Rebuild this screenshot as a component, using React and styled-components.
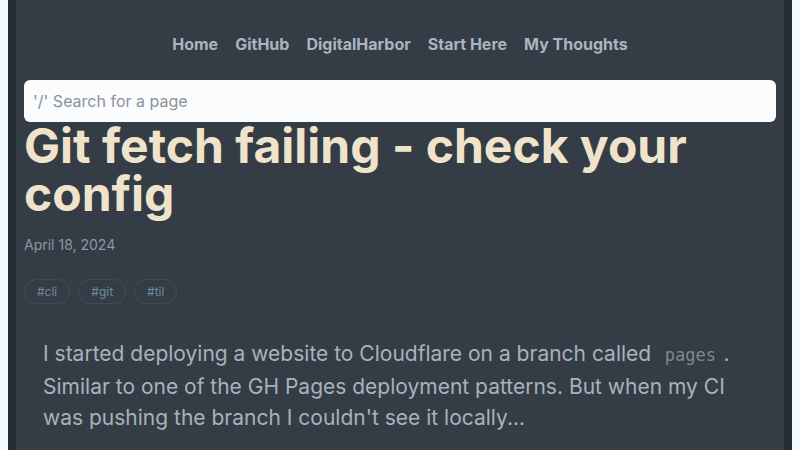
import React from 'react';
import styled, { createGlobalStyle } from 'styled-components';

const GlobalStyle = createGlobalStyle`
  html, body {
    margin: 0;
    padding: 0;
    background: #f0fbff;
    font-family: Inter, "Noto Sans", sans-serif;
  }
  * { box-sizing: border-box; }
`;

const Frame = styled.div`
  margin: 0 8px;
  padding: 0 8px;
  min-height: 100vh;
  background: #252b33;
`;

const Main = styled.main`
  min-height: 100vh;
  background: #343c46;
  padding: 0 8px;
  display: flex;
  flex-direction: column;
`;

const Nav = styled.nav`
  display: flex;
  justify-content: center;
  gap: 17px;
  padding-top: 34px;
  height: 80px;
`;

const NavLink = styled.a`
  font-size: 16px;
  font-weight: 700;
  line-height: 20px;
  color: #a9b4c0;
  text-decoration: none;
`;

const Search = styled.input`
  width: 100%;
  height: 42px;
  border: none;
  border-radius: 6px;
  background: #fafcfe;
  padding: 0 9px;
  font-family: inherit;
  font-size: 16px;
  color: #333;
  outline: none;
  &::placeholder { color: #8b9199; }
`;

const Title = styled.h1`
  margin: 0;
  font-size: 48px;
  line-height: 48px;
  font-weight: 700;
  color: #efe4cb;
`;

const Date = styled.div`
  margin-top: 18px;
  font-size: 14px;
  color: #8a96a2;
`;

const Tags = styled.div`
  display: flex;
  gap: 8px;
  margin-top: 26px;
`;

const Tag = styled.a`
  display: inline-flex;
  align-items: center;
  height: 25px;
  padding: 0 12px;
  border: 1px solid #424c57;
  border-radius: 999px;
  font-size: 12px;
  color: #6f8b9d;
  text-decoration: none;
`;

const Body = styled.p`
  margin: 34px 0 0;
  padding: 0 20px 0 19px;
  font-size: 21px;
  line-height: 31px;
  color: #a8b2bc;
`;

const Code = styled.code`
  font-family: "DejaVu Sans Mono", monospace;
  font-size: 17px;
  color: #7e898f;
  padding: 0 0.45em;
`;

export default function App() {
  return (
    <>
      <GlobalStyle />
      <Frame>
        <Main>
          <Nav>
            <NavLink href="#">Home</NavLink>
            <NavLink href="#">GitHub</NavLink>
            <NavLink href="#">DigitalHarbor</NavLink>
            <NavLink href="#">Start Here</NavLink>
            <NavLink href="#">My Thoughts</NavLink>
          </Nav>
          <Search placeholder="'/' Search for a page" />
          <Title>Git fetch failing - check your config</Title>
          <Date>April 18, 2024</Date>
          <Tags>
            <Tag href="#">#cli</Tag>
            <Tag href="#">#git</Tag>
            <Tag href="#">#til</Tag>
          </Tags>
          <Body>
            I started deploying a website to Cloudflare on a branch called <Code>pages</Code>.
            Similar to one of the GH Pages deployment patterns. But when my CI was pushing the
            branch I couldn't see it locally...
          </Body>
        </Main>
      </Frame>
    </>
  );
}
